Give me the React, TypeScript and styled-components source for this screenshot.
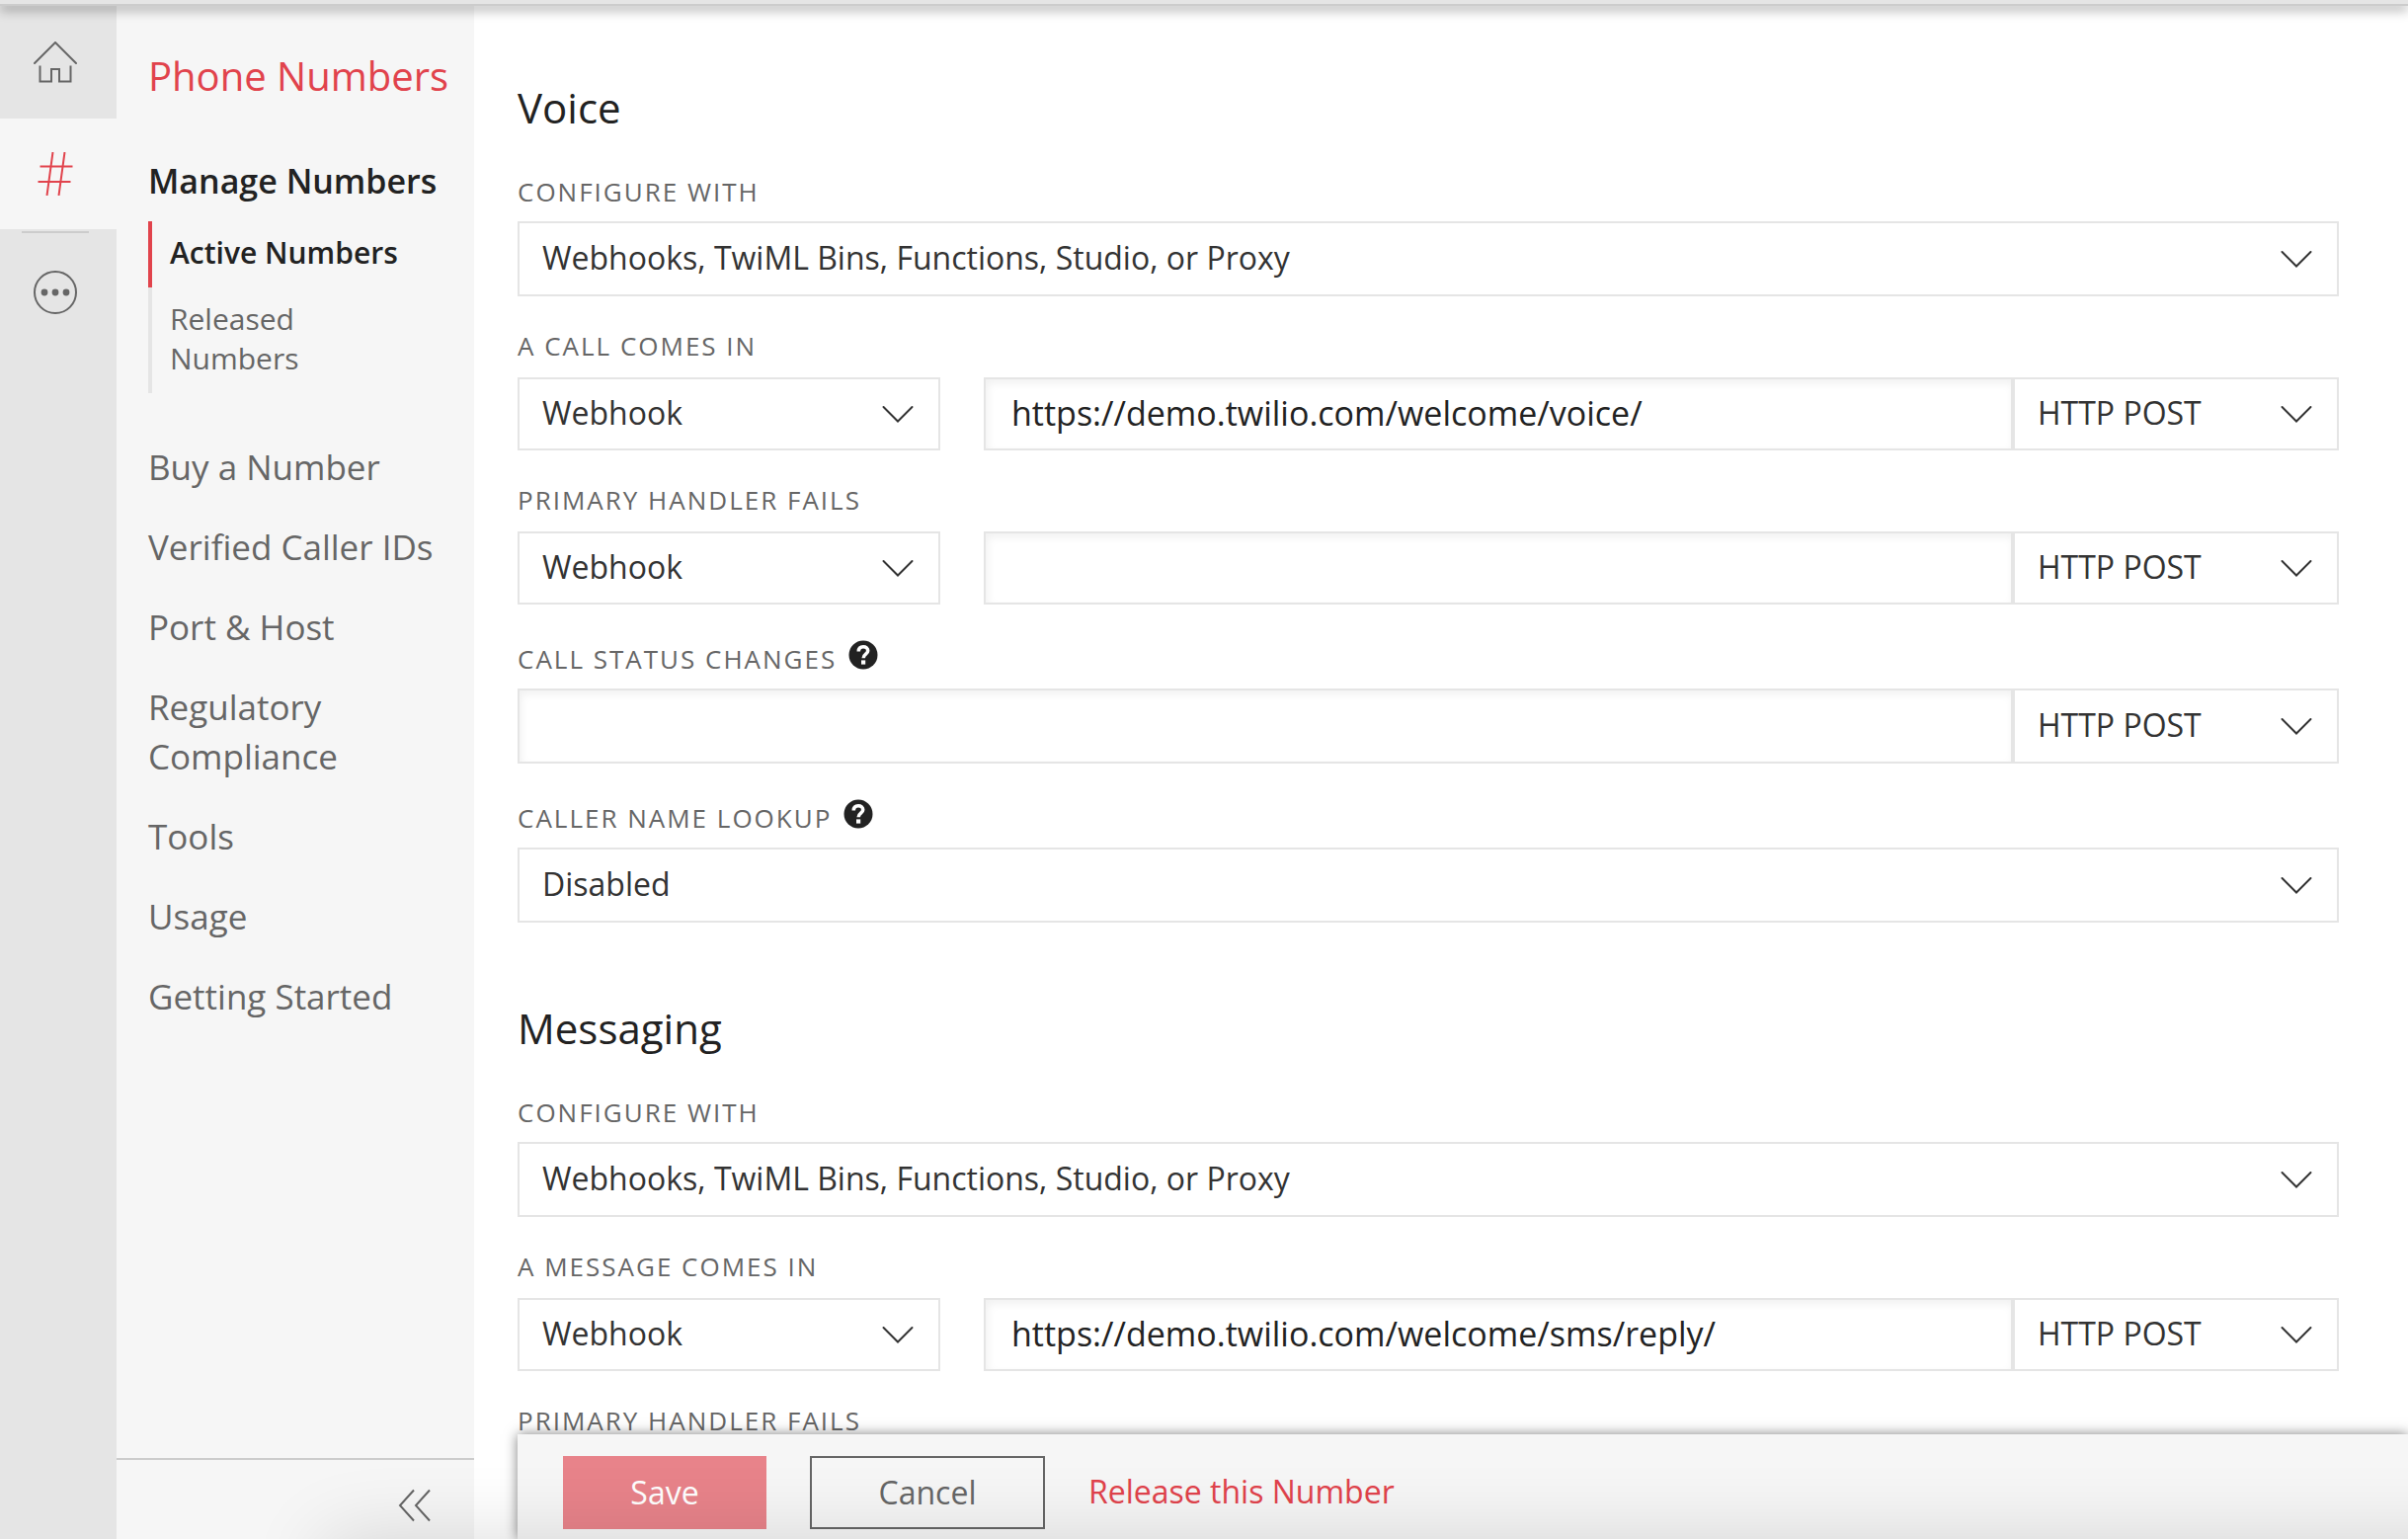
import React, { useId } from 'react';
import styled, { createGlobalStyle } from 'styled-components';

const color = {
  brand: '#e1434c',
  ink: '#222',
  text: '#333',
  muted: '#666',
  line: '#e5e5e5',
  rule: '#ccc',
  panel: '#f6f6f6',
};

const GlobalStyle = createGlobalStyle`
  *, *::before, *::after { box-sizing: border-box; }
  body {
    margin: 0;
    background: #fff;
    color: ${color.ink};
    font-family: "Open Sans", "Noto Sans", sans-serif;
    font-size: 32px;
  }
  button, input, select { font: inherit; color: inherit; margin: 0; border-radius: 0; }
  a { color: inherit; text-decoration: none; }
`;

const Shell = styled.div`
  display: flex;
  flex-direction: column;
  height: 100vh;
  overflow: hidden;
`;

const TopBar = styled.header`
  flex: none;
  height: 6px;
  background: ${color.line};
  border-bottom: 2px solid ${color.rule};
  box-shadow: 0 4px 12px rgba(0, 0, 0, 0.4);
  position: relative;
  z-index: 3;
`;

const Columns = styled.div`
  flex: 1;
  min-height: 0;
  display: flex;
`;

const Rail = styled.nav`
  flex: none;
  width: 118px;
  display: flex;
  flex-direction: column;
  padding-top: 2px;
  background: ${color.line};
  position: relative;
  z-index: 2;
`;

const RailLink = styled.a<{ $active?: boolean }>`
  display: flex;
  align-items: center;
  justify-content: center;
  height: 112px;
  padding-right: 7px;
  color: ${(p) => (p.$active ? color.brand : color.muted)};
  background: ${(p) => (p.$active ? color.panel : 'transparent')};

  svg { display: block; }
`;

const RailRule = styled.hr`
  width: 68px;
  height: 2px;
  margin: 2px 0 4px 22px;
  border: 0;
  background: ${color.rule};
`;

const Sidebar = styled.aside`
  flex: none;
  width: 362px;
  display: flex;
  flex-direction: column;
  background: ${color.panel};
`;

const SidebarBody = styled.div`
  flex: 1;
  min-height: 0;
  padding: 45px 20px 0 32px;
`;

const ProductTitle = styled.h1`
  margin: 0 0 55px;
  font-size: 40px;
  line-height: 52px;
  font-weight: 400;
  color: ${color.brand};
  white-space: nowrap;
`;

const NavList = styled.ul`
  display: flex;
  flex-direction: column;
  gap: 31px;
  margin: 0;
  padding: 0;
  list-style: none;
`;

const NavLink = styled.a<{ $current?: boolean }>`
  display: block;
  font-size: ${(p) => (p.$current ? 34 : 35)}px;
  line-height: 50px;
  font-weight: ${(p) => (p.$current ? 600 : 400)};
  color: ${(p) => (p.$current ? color.ink : color.muted)};
`;

const SubList = styled.ul`
  margin: 16px 0 50px;
  padding: 0;
  list-style: none;
`;

const SubLink = styled.a<{ $current?: boolean }>`
  display: block;
  padding: 12px 60px 15px 18px;
  border-left: 4px solid ${(p) => (p.$current ? color.brand : color.line)};
  font-size: 30px;
  line-height: 40px;
  font-weight: ${(p) => (p.$current ? 600 : 400)};
  color: ${(p) => (p.$current ? color.ink : color.muted)};
  white-space: ${(p) => (p.$current ? 'nowrap' : 'normal')};
`;

const SidebarFoot = styled.div`
  flex: none;
  display: flex;
  align-items: center;
  justify-content: flex-end;
  height: 82px;
  padding: 12px 33px 0;
  border-top: 2px solid ${color.rule};
`;

const CollapseButton = styled.button`
  display: block;
  padding: 10px;
  border: 0;
  background: none;
  color: ${color.muted};
  cursor: pointer;

  svg { display: block; }
`;

const Main = styled.main`
  flex: 1;
  min-width: 0;
  display: flex;
  flex-direction: column;
  background: #fff;
`;

const Form = styled.form`
  flex: 1;
  min-height: 0;
  overflow: hidden;
  display: flex;
  flex-direction: column;
  gap: 81px;
  padding: 77px 70px 0 44px;
`;

const Section = styled.section`
  flex: none;
`;

const SectionTitle = styled.h2`
  margin: 0 0 45px;
  font-size: 42px;
  line-height: 52px;
  font-weight: 400;
`;

const Fields = styled.div`
  display: flex;
  flex-direction: column;
  gap: 36px;
`;

const FieldBox = styled.div<{ $tall?: boolean }>`
  display: flex;
  flex-direction: column;
  gap: ${(p) => (p.$tall ? 16 : 18)}px;
`;

const LabelRow = styled.div`
  display: flex;
  align-items: flex-end;
  gap: 12px;
`;

const Label = styled.label`
  font-size: 26px;
  line-height: 28px;
  letter-spacing: 2px;
  text-transform: uppercase;
  color: ${color.muted};
`;

const HelpButton = styled.button`
  display: block;
  padding: 0 0 3px;
  border: 0;
  background: none;
  color: ${color.ink};
  cursor: help;

  svg { display: block; }
`;

const ControlRow = styled.div<{ $tall?: boolean }>`
  display: flex;
  height: ${(p) => (p.$tall ? 76 : 74)}px;
`;

const SelectBox = styled.div<{ $width?: number; $gapAfter?: number }>`
  display: grid;
  flex: ${(p) => (p.$width ? `0 0 ${p.$width}px` : '1')};
  margin-right: ${(p) => p.$gapAfter ?? 0}px;

  > * { grid-area: 1 / 1; }

  > svg {
    align-self: center;
    justify-self: end;
    margin-right: 26px;
    color: ${color.text};
    pointer-events: none;
  }
`;

const Select = styled.select`
  appearance: none;
  width: 100%;
  min-width: 0;
  padding: 0 70px 4px 23px;
  border: 2px solid ${color.line};
  background: #fff;
  color: ${color.text};
`;

const UrlInput = styled.input`
  flex: 1;
  min-width: 0;
  padding: 0 26px 2px;
  border: 2px solid ${color.line};
  background: #fff;
  color: ${color.ink};
  font-size: 34px;
  box-shadow: inset 2px 4px 8px rgba(0, 0, 0, 0.06);
`;

const ActionBar = styled.footer`
  flex: none;
  display: flex;
  align-items: flex-start;
  gap: 44px;
  height: 106px;
  margin-left: 44px;
  padding: 22px 46px 0;
  background: ${color.panel};
  box-shadow: 0 0 12px rgba(0, 0, 0, 0.5);
  position: relative;
  z-index: 1;
`;

const ActionButton = styled.button<{ $primary?: boolean }>`
  height: 74px;
  width: ${(p) => (p.$primary ? 206 : 238)}px;
  padding: 0 0 2px;
  border: 2px solid ${(p) => (p.$primary ? '#e8838a' : color.muted)};
  background: ${(p) => (p.$primary ? '#e8838a' : 'transparent')};
  color: ${(p) => (p.$primary ? '#fff' : color.muted)};
  cursor: pointer;
`;

const ReleaseLink = styled.a`
  line-height: 72px;
  color: ${color.brand};
`;

const BottomShade = styled.div`
  position: fixed;
  top: 100%;
  left: 330px;
  right: -120px;
  height: 200px;
  box-shadow: 0 0 80px rgba(0, 0, 0, 0.14);
  pointer-events: none;
  z-index: 1;
`;

const HomeIcon = () => (
  <svg width="44" height="44" viewBox="0 0 44 44" fill="none" stroke="currentColor" strokeWidth="2" aria-hidden="true">
    <path d="M1 22 22 1 43 22" strokeLinecap="round" />
    <path d="M6.500 24.500v16H18V28h8v12.500h11.500v-16" />
  </svg>
);

const HashIcon = () => (
  <svg width="36" height="44" viewBox="0 0 36 44" fill="none" stroke="currentColor" strokeWidth="2" aria-hidden="true">
    <path d="M15.500 0 9.500 44M27.500 0 21.500 44M2.500 14.500H35.500M.5 30H33.500" />
  </svg>
);

const MoreIcon = () => (
  <svg width="44" height="44" viewBox="0 0 44 44" aria-hidden="true">
    <circle cx="22" cy="22" r="21" fill="none" stroke="currentColor" strokeWidth="2" />
    <g fill="currentColor">
      <circle cx="11" cy="22" r="3.400" />
      <circle cx="22" cy="22" r="3.400" />
      <circle cx="33" cy="22" r="3.400" />
    </g>
  </svg>
);

const CollapseIcon = () => (
  <svg width="34" height="34" viewBox="0 0 34 34" fill="none" stroke="currentColor" strokeWidth="2" aria-hidden="true">
    <path d="M16 1.500 2 17l14 15.500M32 1.500 18 17l14 15.500" />
  </svg>
);

const ChevronIcon = () => (
  <svg width="34" height="20" viewBox="0 0 34 20" fill="none" stroke="currentColor" strokeWidth="2" aria-hidden="true">
    <path d="M2.500 3 17 17.500 31.500 3" strokeLinecap="round" />
  </svg>
);

const HelpIcon = () => (
  <svg width="30" height="30" viewBox="0 0 30 30" aria-hidden="true">
    <circle cx="15" cy="15" r="14.500" fill="currentColor" />
    <path d="M10.300 11.600C10.300 8.400 12.300 6.800 15 6.800s4.700 1.500 4.700 4c0 3.500-4.500 3.300-4.500 7.400" fill="none" stroke="#fff" strokeWidth="3.600" />
    <rect x="13" y="20.400" width="4.200" height="4.200" fill="#fff" />
  </svg>
);

type DropdownProps = { id?: string; name?: string; options: string[]; width?: number; gapAfter?: number };

const Dropdown = ({ id, name, options, width, gapAfter }: DropdownProps) => (
  <SelectBox $width={width} $gapAfter={gapAfter}>
    <Select id={id} aria-label={name}>
      {options.map((option) => (
        <option key={option}>{option}</option>
      ))}
    </Select>
    <ChevronIcon />
  </SelectBox>
);

type FieldProps = { label: string; help?: boolean; tall?: boolean; children: (id: string) => React.ReactNode };

const Field = ({ label, help, tall, children }: FieldProps) => {
  const id = useId();
  return (
    <FieldBox $tall={tall}>
      <LabelRow>
        <Label htmlFor={id}>{label}</Label>
        {help && (
          <HelpButton type="button" aria-label={`About ${label}`}>
            <HelpIcon />
          </HelpButton>
        )}
      </LabelRow>
      <ControlRow $tall={tall}>{children(id)}</ControlRow>
    </FieldBox>
  );
};

const ConfigureField = () => (
  <Field label="Configure with" tall>
    {(id) => <Dropdown id={id} options={['Webhooks, TwiML Bins, Functions, Studio, or Proxy']} />}
  </Field>
);

const HandlerField = ({ label, url = '' }: { label: string; url?: string }) => (
  <Field label={label}>
    {(id) => (
      <>
        <Dropdown id={id} options={['Webhook']} width={428} gapAfter={44} />
        <UrlInput type="text" aria-label={`${label} URL`} defaultValue={url} />
        <Dropdown name={`${label} method`} options={['HTTP POST']} width={330} />
      </>
    )}
  </Field>
);

const navItems = ['Buy a Number', 'Verified Caller IDs', 'Port & Host', 'Regulatory Compliance', 'Tools', 'Usage', 'Getting Started'];

export default function App() {
  return (
    <Shell>
      <GlobalStyle />
      <TopBar />
      <Columns>
        <Rail aria-label="Products">
          <RailLink href="#home" aria-label="Home"><HomeIcon /></RailLink>
          <RailLink href="#numbers" aria-label="Phone Numbers" $active><HashIcon /></RailLink>
          <RailRule />
          <RailLink href="#more" aria-label="All products"><MoreIcon /></RailLink>
        </Rail>
        <Sidebar>
          <SidebarBody>
            <ProductTitle>Phone Numbers</ProductTitle>
            <NavLink href="#manage" $current>Manage Numbers</NavLink>
            <SubList>
              <li><SubLink href="#active" $current>Active Numbers</SubLink></li>
              <li><SubLink href="#released">Released Numbers</SubLink></li>
            </SubList>
            <NavList>
              {navItems.map((item) => (
                <li key={item}><NavLink href="#item">{item}</NavLink></li>
              ))}
            </NavList>
          </SidebarBody>
          <SidebarFoot>
            <CollapseButton type="button" aria-label="Collapse menu"><CollapseIcon /></CollapseButton>
          </SidebarFoot>
        </Sidebar>
        <Main>
          <Form id="number-form" onSubmit={(event) => event.preventDefault()}>
            <Section>
              <SectionTitle>Voice</SectionTitle>
              <Fields>
                <ConfigureField />
                <HandlerField label="A call comes in" url="https://demo.twilio.com/welcome/voice/" />
                <HandlerField label="Primary handler fails" />
                <Field label="Call status changes" help tall>
                  {(id) => (
                    <>
                      <UrlInput id={id} type="text" />
                      <Dropdown name="Call status changes method" options={['HTTP POST']} width={330} />
                    </>
                  )}
                </Field>
                <Field label="Caller name lookup" help tall>
                  {(id) => <Dropdown id={id} options={['Disabled']} />}
                </Field>
              </Fields>
            </Section>
            <Section>
              <SectionTitle>Messaging</SectionTitle>
              <Fields>
                <ConfigureField />
                <HandlerField label="A message comes in" url="https://demo.twilio.com/welcome/sms/reply/" />
                <HandlerField label="Primary handler fails" />
              </Fields>
            </Section>
          </Form>
          <ActionBar>
            <ActionButton type="submit" form="number-form" $primary>Save</ActionButton>
            <ActionButton type="button">Cancel</ActionButton>
            <ReleaseLink href="#release">Release this Number</ReleaseLink>
          </ActionBar>
        </Main>
      </Columns>
      <BottomShade />
    </Shell>
  );
}
